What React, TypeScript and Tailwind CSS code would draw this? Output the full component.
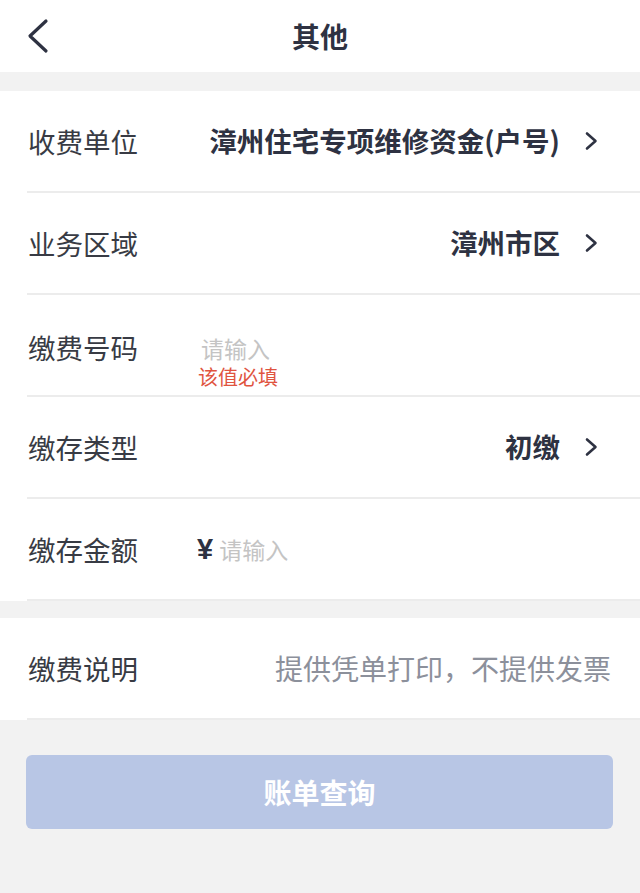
import React from "react";

const font = { fontFamily: '"Noto Sans CJK SC", "Noto Sans", sans-serif' };

function Chevron() {
  return (
    <svg width="14" height="20" viewBox="0 0 14 20" className="ml-[24px] shrink-0">
      <path d="M3 2.5 L11.5 10 L3 17.5" fill="none" stroke="#2e3242" strokeWidth="2.6" strokeLinecap="round" strokeLinejoin="round" />
    </svg>
  );
}

function Row({ label, children }: { label: string; children?: React.ReactNode }) {
  return (
    <div className="ml-[27px] h-[102px] flex items-center border-b-2 border-[#ececec] pr-[42px]">
      <div className="w-[172px] pl-[1px] text-[27.5px] leading-[32px] text-[#383b44] shrink-0">{label}</div>
      <div className="flex-1 flex items-center justify-end min-w-0">{children}</div>
    </div>
  );
}

export default function App() {
  return (
    <div style={font} className="w-[640px] min-h-[893px] bg-[#f2f2f2]">
      <div className="h-[72px] bg-white grid grid-cols-[1fr_auto_1fr] items-center">
        <div className="pl-[26px] flex items-center">
          <svg width="24" height="36" viewBox="0 0 24 36">
            <path d="M20 3 L4 18 L20 33" fill="none" stroke="#2e3242" strokeWidth="3.2" strokeLinecap="round" strokeLinejoin="round" />
          </svg>
        </div>
        <div className="text-[28px] font-bold text-[#2e3242] leading-none">其他</div>
        <div />
      </div>
      <div className="h-[19px]" />
      <div className="bg-white">
        <Row label="收费单位">
          <span className="text-[27.5px] font-bold text-[#2e3242] whitespace-nowrap">漳州住宅专项维修资金(户号)</span>
          <Chevron />
        </Row>
        <Row label="业务区域">
          <span className="text-[27.5px] font-bold text-[#2e3242]">漳州市区</span>
          <Chevron />
        </Row>
        <div className="ml-[27px] h-[102px] flex items-start border-b-2 border-[#ececec] pt-[36px]">
          <div className="w-[172px] pl-[1px] text-[27.5px] leading-[32px] text-[#383b44] shrink-0">缴费号码</div>
          <div className="flex flex-col items-start">
            <span className="mt-[5px] ml-[2px] text-[23px] leading-[24px] text-[#c4c4c4]">请输入</span>
            <span className="mt-[6px] -ml-[1px] text-[20px] leading-[21px] text-[#e0543f]">该值必填</span>
          </div>
        </div>
        <Row label="缴存类型">
          <span className="text-[27.5px] font-bold text-[#2e3242]">初缴</span>
          <Chevron />
        </Row>
        <div className="ml-[27px] h-[102px] flex items-center border-b-2 border-[#ececec]">
          <div className="w-[172px] pl-[1px] text-[27.5px] leading-[32px] text-[#383b44] shrink-0">缴存金额</div>
          <span className="-ml-[2px] text-[29px] font-bold text-[#2e3242] leading-none" style={{ fontFamily: '"Liberation Sans", sans-serif' }}>¥</span>
          <span className="ml-[6px] text-[23px] leading-[28px] text-[#c4c4c4]">请输入</span>
        </div>
      </div>
      <div className="h-[17px]" />
      <div className="bg-white">
        <div className="ml-[27px] h-[102px] flex items-center border-b-2 border-[#ececec] pr-[29px]">
          <div className="w-[172px] pl-[1px] text-[27.5px] leading-[32px] text-[#383b44] shrink-0">缴费说明</div>
          <div className="flex-1 text-right text-[28px] leading-[32px] text-[#8c909b] whitespace-nowrap">提供凭单打印，不提供发票</div>
        </div>
      </div>
      <div className="mt-[35px] ml-[26px] mr-[27px] h-[74px] rounded-[6px] bg-[#b8c6e5] flex items-center justify-center">
        <span className="text-[28px] font-bold text-white">账单查询</span>
      </div>
    </div>
  );
}
